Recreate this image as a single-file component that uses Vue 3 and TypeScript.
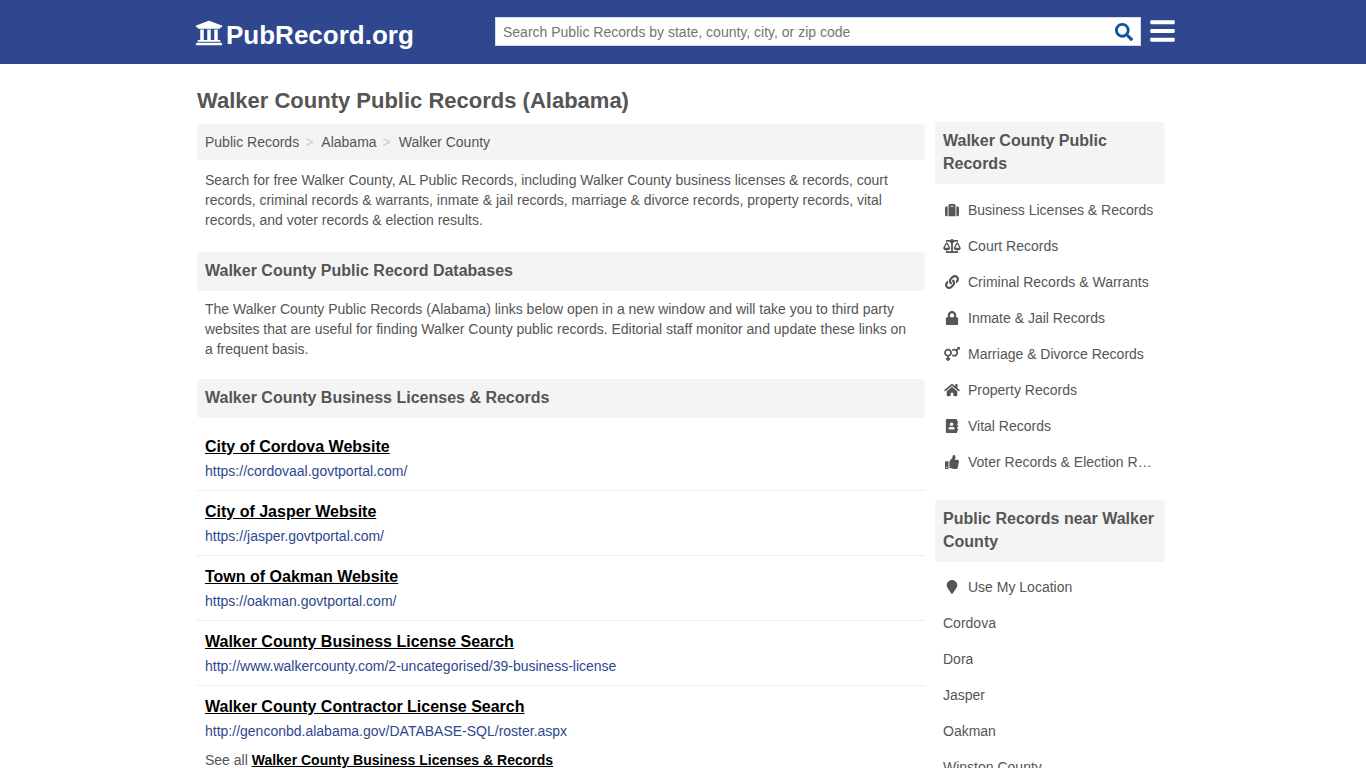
<script setup lang="ts">
import { ref } from 'vue'

interface Icon {
  width: number
  path: string
}

interface SideLink {
  label: string
  icon?: Icon
}

interface Resource {
  title: string
  url: string
}

const query = ref('')

const university: Icon = {
  width: 512,
  path: 'M496 128v16a8 8 0 0 1-8 8h-24v12c0 6.627-5.373 12-12 12H60c-6.627 0-12-5.373-12-12v-12H24a8 8 0 0 1-8-8v-16a8 8 0 0 1 4.941-7.392l232-88a7.996 7.996 0 0 1 6.118 0l232 88A8 8 0 0 1 496 128zm-24 304H40c-13.255 0-24 10.745-24 24v16a8 8 0 0 0 8 8h464a8 8 0 0 0 8-8v-16c0-13.255-10.745-24-24-24zM96 192v192H60c-6.627 0-12 5.373-12 12v20h416v-20c0-6.627-5.373-12-12-12h-36V192h-64v192h-64V192h-64v192h-64V192H96z',
}
const search: Icon = {
  width: 512,
  path: 'M505 442.7L405.3 343c-4.5-4.5-10.6-7-17-7H372c27.6-35.3 44-79.7 44-128C416 93.1 322.9 0 208 0S0 93.1 0 208s93.1 208 208 208c48.3 0 92.7-16.4 128-44v16.3c0 6.4 2.5 12.5 7 17l99.7 99.7c9.4 9.4 24.6 9.4 33.9 0l28.3-28.3c9.4-9.4 9.4-24.6.1-34zM208 336c-70.7 0-128-57.2-128-128 0-70.7 57.2-128 128-128 70.7 0 128 57.2 128 128 0 70.7-57.2 128-128 128z',
}
const bars: Icon = {
  width: 448,
  path: 'M16 132h416c8.837 0 16-7.163 16-16V76c0-8.837-7.163-16-16-16H16C7.163 60 0 67.163 0 76v40c0 8.837 7.163 16 16 16zm0 160h416c8.837 0 16-7.163 16-16v-40c0-8.837-7.163-16-16-16H16c-8.837 0-16 7.163-16 16v40c0 8.837 7.163 16 16 16zm0 160h416c8.837 0 16-7.163 16-16v-40c0-8.837-7.163-16-16-16H16c-8.837 0-16 7.163-16 16v40c0 8.837 7.163 16 16 16z',
}

const categories: SideLink[] = [
  {
    label: 'Business Licenses & Records',
    icon: {
      width: 512,
      path: 'M128 480h256V80c0-26.5-21.5-48-48-48H176c-26.5 0-48 21.5-48 48v400zm64-384h128v32H192V96zm320 80v256c0 26.5-21.5 48-48 48h-48V128h48c26.5 0 48 21.5 48 48zM96 480H48c-26.5 0-48-21.5-48-48V176c0-26.5 21.5-48 48-48h48v352z',
    },
  },
  {
    label: 'Court Records',
    icon: {
      width: 640,
      path: 'M256 336h-.02c0-16.18 1.34-8.73-85.05-181.51-17.65-35.29-68.19-35.36-85.87 0C-2.06 328.75.02 320.33.02 336H0c0 44.18 57.31 80 128 80s128-35.82 128-80zM128 176l72 144H56l72-144zm511.98 160c0-16.18 1.34-8.73-85.05-181.51-17.65-35.29-68.19-35.36-85.87 0-87.12 174.26-85.04 165.84-85.04 181.51H384c0 44.18 57.31 80 128 80s128-35.82 128-80h-.02zM440 320l72-144 72 144H440zm88 128H352V153.25c23.51-10.29 41.16-31.48 46.39-57.25H528c8.84 0 16-7.16 16-16V48c0-8.84-7.16-16-16-16H383.64C369.04 12.68 346.09 0 320 0s-49.04 12.68-63.64 32H112c-8.84 0-16 7.16-16 16v32c0 8.84 7.16 16 16 16h129.61c5.23 25.76 22.87 46.96 46.39 57.25V448H112c-8.84 0-16 7.16-16 16v32c0 8.84 7.16 16 16 16h416c8.84 0 16-7.16 16-16v-32c0-8.84-7.16-16-16-16z',
    },
  },
  {
    label: 'Criminal Records & Warrants',
    icon: {
      width: 512,
      path: 'M326.612 185.391c59.747 59.809 58.927 155.698.36 214.59-.11.12-.24.25-.36.37l-67.2 67.2c-59.27 59.27-155.699 59.262-214.96 0-59.27-59.26-59.27-155.7 0-214.96l37.106-37.106c9.84-9.84 26.786-3.3 27.294 10.606.648 17.722 3.826 35.527 9.69 52.721 1.986 5.822.567 12.262-3.783 16.612l-13.087 13.087c-28.026 28.026-28.905 73.66-1.155 101.96 28.024 28.579 74.086 28.749 102.325.51l67.2-67.19c28.191-28.191 28.073-73.757 0-101.83-3.701-3.694-7.429-6.564-10.341-8.569a16.037 16.037 0 0 1-6.947-12.606c-.396-10.567 3.348-21.456 11.698-29.806l21.054-21.055c5.521-5.521 14.182-6.199 20.584-1.731a152.482 152.482 0 0 1 20.522 17.197zM467.547 44.449c-59.261-59.262-155.69-59.27-214.96 0l-67.2 67.2c-.12.12-.25.25-.36.37-58.566 58.892-59.387 154.781.36 214.59a152.454 152.454 0 0 0 20.521 17.196c6.402 4.468 15.064 3.789 20.584-1.731l21.054-21.055c8.35-8.35 12.094-19.239 11.698-29.806a16.037 16.037 0 0 0-6.947-12.606c-2.912-2.005-6.64-4.875-10.341-8.569-28.073-28.073-28.191-73.639 0-101.83l67.2-67.19c28.239-28.239 74.3-28.069 102.325.51 27.75 28.3 26.872 73.934-1.155 101.96l-13.087 13.087c-4.35 4.35-5.769 10.79-3.783 16.612 5.864 17.194 9.042 34.999 9.69 52.721.509 13.906 17.454 20.446 27.294 10.606l37.106-37.106c59.271-59.259 59.271-155.699.001-214.959z',
    },
  },
  {
    label: 'Inmate & Jail Records',
    icon: {
      width: 448,
      path: 'M400 224h-24v-72C376 68.2 307.8 0 224 0S72 68.2 72 152v72H48c-26.5 0-48 21.5-48 48v192c0 26.5 21.5 48 48 48h352c26.5 0 48-21.5 48-48V272c0-26.5-21.5-48-48-48zm-104 0H152v-72c0-39.7 32.3-72 72-72s72 32.3 72 72v72z',
    },
  },
  {
    label: 'Marriage & Divorce Records',
    icon: {
      width: 576,
      path: 'M564 0h-79c-10.7 0-16 12.9-8.5 20.5l16.9 16.9-48.7 48.7C422.5 72.1 396.2 64 368 64c-33.7 0-64.6 11.6-89.2 30.9 14 16.7 25 36 32.1 57.1 14.5-14.8 34.7-24 57.1-24 44.1 0 80 35.9 80 80s-35.9 80-80 80c-22.3 0-42.6-9.2-57.1-24-7.1 21.1-18 40.4-32.1 57.1 24.5 19.4 55.5 30.9 89.2 30.9 79.5 0 144-64.5 144-144 0-28.2-8.1-54.5-22.1-76.7l48.7-48.7 16.9 16.9c2.4 2.4 5.4 3.5 8.4 3.5 6.2 0 12.1-4.8 12.1-12V12c0-6.6-5.4-12-12-12zM144 64C64.5 64 0 128.5 0 208c0 68.5 47.9 125.9 112 140.4V400H76c-6.6 0-12 5.4-12 12v40c0 6.6 5.4 12 12 12h36v36c0 6.6 5.4 12 12 12h40c6.6 0 12-5.4 12-12v-36h36c6.6 0 12-5.4 12-12v-40c0-6.6-5.4-12-12-12h-36v-51.6c64.1-14.6 112-71.9 112-140.4 0-79.5-64.5-144-144-144zm0 224c-44.1 0-80-35.9-80-80s35.9-80 80-80 80 35.9 80 80-35.9 80-80 80z',
    },
  },
  {
    label: 'Property Records',
    icon: {
      width: 576,
      path: 'M280.37 148.26L96 300.11V464a16 16 0 0 0 16 16l112.06-.29a16 16 0 0 0 15.92-16V368a16 16 0 0 1 16-16h64a16 16 0 0 1 16 16v95.64a16 16 0 0 0 16 16.05L464 480a16 16 0 0 0 16-16V300L295.67 148.26a12.19 12.19 0 0 0-15.3 0zM571.6 251.47L488 182.56V44.05a12 12 0 0 0-12-12h-56a12 12 0 0 0-12 12v72.61L318.47 43a48 48 0 0 0-61 0L4.34 251.47a12 12 0 0 0-1.6 16.9l25.5 31A12 12 0 0 0 45.15 301l235.22-193.74a12.19 12.19 0 0 1 15.3 0L530.9 301a12 12 0 0 0 16.9-1.6l25.5-31a12 12 0 0 0-1.7-16.93z',
    },
  },
  {
    label: 'Vital Records',
    icon: {
      width: 448,
      path: 'M436 160c6.6 0 12-5.4 12-12v-40c0-6.6-5.4-12-12-12h-20V48c0-26.5-21.5-48-48-48H48C21.5 0 0 21.5 0 48v416c0 26.5 21.5 48 48 48h320c26.5 0 48-21.5 48-48v-48h20c6.6 0 12-5.4 12-12v-40c0-6.6-5.4-12-12-12h-20v-64h20c6.6 0 12-5.4 12-12v-40c0-6.6-5.4-12-12-12h-20v-64h20zm-228-32c35.3 0 64 28.7 64 64s-28.7 64-64 64-64-28.7-64-64 28.7-64 64-64zm112 236.8c0 10.6-10 19.2-22.4 19.2H118.4C106 384 96 375.4 96 364.8v-19.2c0-31.8 30.1-57.6 67.2-57.6h5c12.3 5.1 25.7 8 39.8 8s27.6-2.9 39.8-8h5c37.1 0 67.2 25.8 67.2 57.6v19.2z',
    },
  },
  {
    label: 'Voter Records & Election Results',
    icon: {
      width: 512,
      path: 'M104 224H24c-13.255 0-24 10.745-24 24v240c0 13.255 10.745 24 24 24h80c13.255 0 24-10.745 24-24V248c0-13.255-10.745-24-24-24zM64 472c-13.255 0-24-10.745-24-24s10.745-24 24-24 24 10.745 24 24-10.745 24-24 24zM384 81.452c0 42.416-25.97 66.208-33.277 94.548h101.723c33.397 0 59.397 27.746 59.553 58.098.084 17.938-7.546 37.249-19.439 49.197l-.11.11c9.836 23.337 8.237 56.037-9.308 79.469 8.681 25.895-.069 57.704-16.382 74.757 4.298 17.598 2.244 32.575-6.148 44.632C440.202 511.587 389.616 512 346.839 512l-2.845-.001c-48.287-.017-87.806-17.598-119.56-31.725-15.957-7.099-36.821-15.887-52.651-16.178-6.54-.12-11.783-5.457-11.783-11.998v-213.77c0-3.2 1.282-6.271 3.558-8.521 39.614-39.144 56.648-80.587 89.117-113.111 14.804-14.832 20.188-37.236 25.393-58.902C282.515 39.293 291.817 0 312 0c24 0 72 8 72 81.452z',
    },
  },
]

const places: SideLink[] = [
  {
    label: 'Use My Location',
    icon: {
      width: 384,
      path: 'M172.268 501.67C26.97 291.031 0 269.413 0 192 0 85.961 85.961 0 192 0s192 85.961 192 192c0 77.413-26.97 99.031-172.268 309.67-9.535 13.774-29.93 13.773-39.464 0z',
    },
  },
  { label: 'Cordova' },
  { label: 'Dora' },
  { label: 'Jasper' },
  { label: 'Oakman' },
  { label: 'Winston County' },
]

const panels = [
  { heading: 'Walker County Public Records', links: categories },
  { heading: 'Public Records near Walker County', links: places },
]

const resources: Resource[] = [
  { title: 'City of Cordova Website', url: 'https://cordovaal.govtportal.com/' },
  { title: 'City of Jasper Website', url: 'https://jasper.govtportal.com/' },
  { title: 'Town of Oakman Website', url: 'https://oakman.govtportal.com/' },
  {
    title: 'Walker County Business License Search',
    url: 'http://www.walkercounty.com/2-uncategorised/39-business-license',
  },
  {
    title: 'Walker County Contractor License Search',
    url: 'http://genconbd.alabama.gov/DATABASE-SQL/roster.aspx',
  },
]
</script>

<template>
  <div class="page">
    <header class="topbar">
      <div class="topbar-inner">
        <a class="logo" href="#">
          <svg class="logo-icon" :viewBox="`0 0 ${university.width} 512`" aria-hidden="true">
            <path :d="university.path" />
          </svg>
          <span>PubRecord.org</span>
        </a>
        <form class="search" role="search" @submit.prevent>
          <input
            v-model="query"
            class="search-input"
            type="text"
            aria-label="Search Public Records"
            placeholder="Search Public Records by state, county, city, or zip code"
          />
          <button class="search-button" type="submit" aria-label="Search">
            <svg :viewBox="`0 0 ${search.width} 512`" aria-hidden="true">
              <path :d="search.path" />
            </svg>
          </button>
        </form>
        <button class="menu-button" type="button" aria-label="Menu">
          <svg :viewBox="`0 0 ${bars.width} 512`" aria-hidden="true">
            <path :d="bars.path" />
          </svg>
        </button>
      </div>
    </header>

    <div class="content">
      <main class="main">
        <h1>Walker County Public Records (Alabama)</h1>
        <nav aria-label="Breadcrumb">
          <ol class="breadcrumb">
            <li><a href="#">Public Records</a></li>
            <li><a href="#">Alabama</a></li>
            <li><a href="#">Walker County</a></li>
          </ol>
        </nav>
        <p class="intro">
          Search for free Walker County, AL Public Records, including Walker County business
          licenses &amp; records, court records, criminal records &amp; warrants, inmate &amp; jail
          records, marriage &amp; divorce records, property records, vital records, and voter
          records &amp; election results.
        </p>

        <h2>Walker County Public Record Databases</h2>
        <p>
          The Walker County Public Records (Alabama) links below open in a new window and will take
          you to third party websites that are useful for finding Walker County public records.
          Editorial staff monitor and update these links on a frequent basis.
        </p>

        <h2>Walker County Business Licenses &amp; Records</h2>
        <ul class="resources">
          <li v-for="item in resources" :key="item.url">
            <a class="resource-title" href="#">{{ item.title }}</a>
            <span class="resource-url">{{ item.url }}</span>
          </li>
        </ul>
        <div class="see-all">
          See all <a href="#">Walker County Business Licenses &amp; Records</a>
        </div>
      </main>

      <aside class="sidebar">
        <section v-for="panel in panels" :key="panel.heading">
          <h2>{{ panel.heading }}</h2>
          <ul class="side-links">
            <li v-for="link in panel.links" :key="link.label">
              <a href="#">
                <svg v-if="link.icon" :viewBox="`0 0 ${link.icon.width} 512`" aria-hidden="true">
                  <path :d="link.icon.path" />
                </svg>
                <span>{{ link.label }}</span>
              </a>
            </li>
          </ul>
        </section>
      </aside>
    </div>
  </div>
</template>

<style>
body {
  margin: 0;
  background: #fff;
}
</style>

<style scoped>
.page {
  font-family: 'Liberation Sans', Arial, sans-serif;
  font-size: 14px;
  line-height: 20px;
  color: #555;
}

svg {
  display: block;
  fill: currentColor;
}

a {
  color: inherit;
  text-decoration: none;
}

ul,
ol {
  margin: 0;
  padding: 0;
  list-style: none;
}

button {
  border: 0;
  padding: 0;
  background: none;
  cursor: pointer;
}

.topbar {
  background: #2e478e;
}

.topbar-inner {
  box-sizing: border-box;
  display: flex;
  align-items: flex-start;
  max-width: 984px;
  height: 64px;
  margin: 0 auto;
  padding: 17px 0 0 4px;
}

.logo {
  display: flex;
  align-items: center;
  gap: 3px;
  width: 300px;
  color: #fff;
  font-size: 26px;
  font-weight: bold;
  line-height: 36px;
}

.logo-icon {
  width: 28px;
  height: 28px;
  margin-bottom: 4px;
}

.search {
  box-sizing: border-box;
  display: flex;
  flex: 1;
  height: 29px;
  border: 1px solid #d5dcef;
  background: #fff;
}

.search-input {
  flex: 1;
  min-width: 0;
  border: 0;
  padding: 0 7px;
  outline: 0;
  background: transparent;
  color: #555;
  font: inherit;
}

.search-input::placeholder {
  color: #757575;
  opacity: 1;
}

.search-button {
  display: flex;
  align-items: center;
  padding: 0 7px;
  color: #0b559f;
}

.search-button svg {
  width: 18px;
  height: 18px;
}

.menu-button {
  margin-left: 9px;
  color: #fff;
}

.menu-button svg {
  width: 25px;
  height: 28px;
}

.content {
  box-sizing: border-box;
  display: flex;
  gap: 10px;
  max-width: 980px;
  margin: 0 auto;
  padding: 0 8px 0 4px;
}

.main {
  flex: 1;
  min-width: 0;
}

h1 {
  margin: 23px 0 9px;
  font-size: 22px;
  line-height: 28px;
}

h2 {
  margin: 0;
  padding: 7px 8px 9px;
  border-radius: 4px;
  background: #f4f4f4;
  font-size: 16px;
  line-height: 23px;
}

.breadcrumb {
  display: flex;
  padding: 8px;
  border-radius: 4px;
  background: #f4f4f4;
}

.breadcrumb li + li::before {
  content: '>';
  margin: 0 8px 0 6px;
  color: #ccc;
}

p {
  margin: 0;
  padding: 8px 8px 20px;
}

.intro {
  padding: 10px 8px 22px;
}

.resources {
  padding-top: 8px;
}

.resources li {
  padding: 8px;
  border-bottom: 1px solid #eee;
}

.resources li:last-child {
  border-bottom: 0;
}

.resource-title {
  display: block;
  color: #000;
  font-size: 16px;
  font-weight: bold;
  line-height: 26px;
  text-decoration: underline;
}

.resource-url {
  display: block;
  color: #2e478e;
  line-height: 22px;
}

.see-all {
  padding: 0 8px 20px;
}

.see-all a {
  color: #000;
  font-weight: bold;
  text-decoration: underline;
}

.sidebar {
  display: flex;
  flex: 0 0 230px;
  flex-direction: column;
  gap: 20px;
  min-width: 0;
  padding-top: 58px;
}

.side-links {
  padding: 8px 8px 0;
}

section + section .side-links {
  padding-top: 7px;
}

.side-links a {
  display: flex;
  align-items: center;
  gap: 7px;
  height: 36px;
}

.side-links svg {
  flex: none;
  width: 18px;
  height: 14px;
}

.side-links span {
  overflow: hidden;
  text-overflow: ellipsis;
  white-space: nowrap;
}
</style>
